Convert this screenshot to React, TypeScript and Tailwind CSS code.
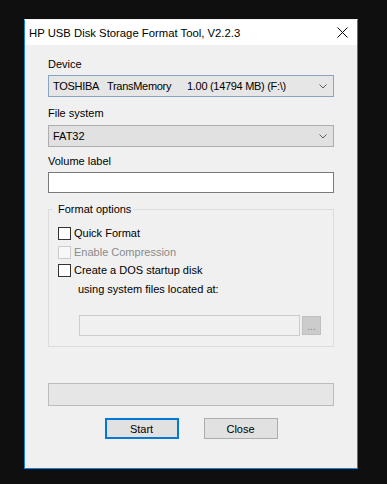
import React from "react";

function Chevron() {
  return (
    <svg width="8" height="5" viewBox="0 0 8 5" className="block">
      <path d="M0.5 0.5 L4 4 L7.5 0.5" fill="none" stroke="#5a5a5a" strokeWidth="1" />
    </svg>
  );
}

function Check({ disabled = false }: { disabled?: boolean }) {
  return (
    <div
      className={
        disabled
          ? "w-[13px] h-[13px] border border-[#cccccc] bg-[#f7f7f7] shrink-0"
          : "w-[13px] h-[13px] border border-[#333333] bg-white shrink-0"
      }
    />
  );
}

export default function App() {
  return (
    <div
      className="w-[387px] h-[484px] bg-[#0f0f0f] pt-[19px] pl-[24px]"
      style={{ fontFamily: '"Liberation Sans", Arial, sans-serif' }}
    >
      <div className="w-[334px] h-[450px] border border-[#1683d8] border-t-[#f4f4f4] flex flex-col">
        {/* Title bar */}
        <div className="h-[25px] bg-white flex items-center pl-[4px] pr-[9px] shrink-0">
          <span className="text-[11.3px] leading-[16px] text-black flex-1">
            HP USB Disk Storage Format Tool, V2.2.3
          </span>
          <svg width="11" height="11" viewBox="0 0 11 11" className="block">
            <path d="M0.5 0.5 L10.5 10.5 M10.5 0.5 L0.5 10.5" stroke="#000" strokeWidth="1" />
          </svg>
        </div>

        {/* Client area */}
        <div className="flex-1 bg-[#f0f0f0] px-[23px] text-[11px] text-black flex flex-col">
          <div className="mt-[12px] h-[14px] leading-[14px]">Device</div>
          <div className="mt-[4px] h-[22px] border border-[#8aa4c0] bg-[#e6e6e6] flex items-center pl-[4px] pr-[6px]">
            <div className="flex-1 flex whitespace-pre leading-[14px] tracking-[-0.3px]">
              <span className="inline-block w-[54px]">TOSHIBA</span>
              <span className="inline-block w-[80px]">TransMemory</span>
              <span>1.00 (14794 MB) (F:\)</span>
            </div>
            <Chevron />
          </div>

          <div className="mt-[9px] h-[14px] leading-[14px]">File system</div>
          <div className="mt-[5px] h-[22px] border border-[#adadad] bg-[#e1e1e1] flex items-center pl-[4px] pr-[6px]">
            <div className="flex-1 leading-[14px]">FAT32</div>
            <Chevron />
          </div>

          <div className="mt-[7px] h-[14px] leading-[14px]">Volume label</div>
          <div className="mt-[4px] h-[21px] border border-[#7a7a7a] bg-white" />

          <fieldset className="mt-[9px] border border-[#dcdcdc] pl-[9px] pb-[10px]">
            <legend className="ml-[-5px] pl-[5px] pr-[2px] leading-[14px] h-[14px]">
              Format options
            </legend>
            <div className="mt-[11px] h-[13px] flex items-center gap-[3px]">
              <Check />
              <span className="leading-[13px]">Quick Format</span>
            </div>
            <div className="mt-[6px] h-[13px] flex items-center gap-[3px]">
              <Check disabled />
              <span className="leading-[13px] text-[#8a8a8a]">Enable Compression</span>
            </div>
            <div className="mt-[5px] h-[13px] flex items-center gap-[3px]">
              <Check />
              <span className="leading-[13px]">Create a DOS startup disk</span>
            </div>
            <div className="mt-[5px] ml-[20px] h-[14px] leading-[14px]">
              using system files located at:
            </div>
            <div className="mt-[19px] ml-[21px] flex items-start">
              <div className="w-[221px] h-[21px] border border-[#cccccc] bg-[#f0f0f0]" />
              <div className="ml-[2px] mt-[1px] w-[19px] h-[19px] border border-[#bfbfbf] bg-[#cccccc] flex items-end justify-center text-[#8a8a8a] text-[10px] leading-[12px] pb-[1px]">
                ...
              </div>
            </div>
          </fieldset>

          <div className="mt-[36px] h-[23px] border border-[#bcbcbc] bg-[#e6e6e6]" />

          <div className="mt-[12px] flex justify-center gap-[25px]">
            <div className="w-[74px] h-[21px] border-2 border-[#0078d7] bg-[#e1e1e1] flex items-center justify-center text-[11px] leading-[14px]">
              Start
            </div>
            <div className="w-[74px] h-[21px] border border-[#adadad] bg-[#e1e1e1] flex items-center justify-center text-[11px] leading-[14px]">
              Close
            </div>
          </div>
        </div>
      </div>
    </div>
  );
}
